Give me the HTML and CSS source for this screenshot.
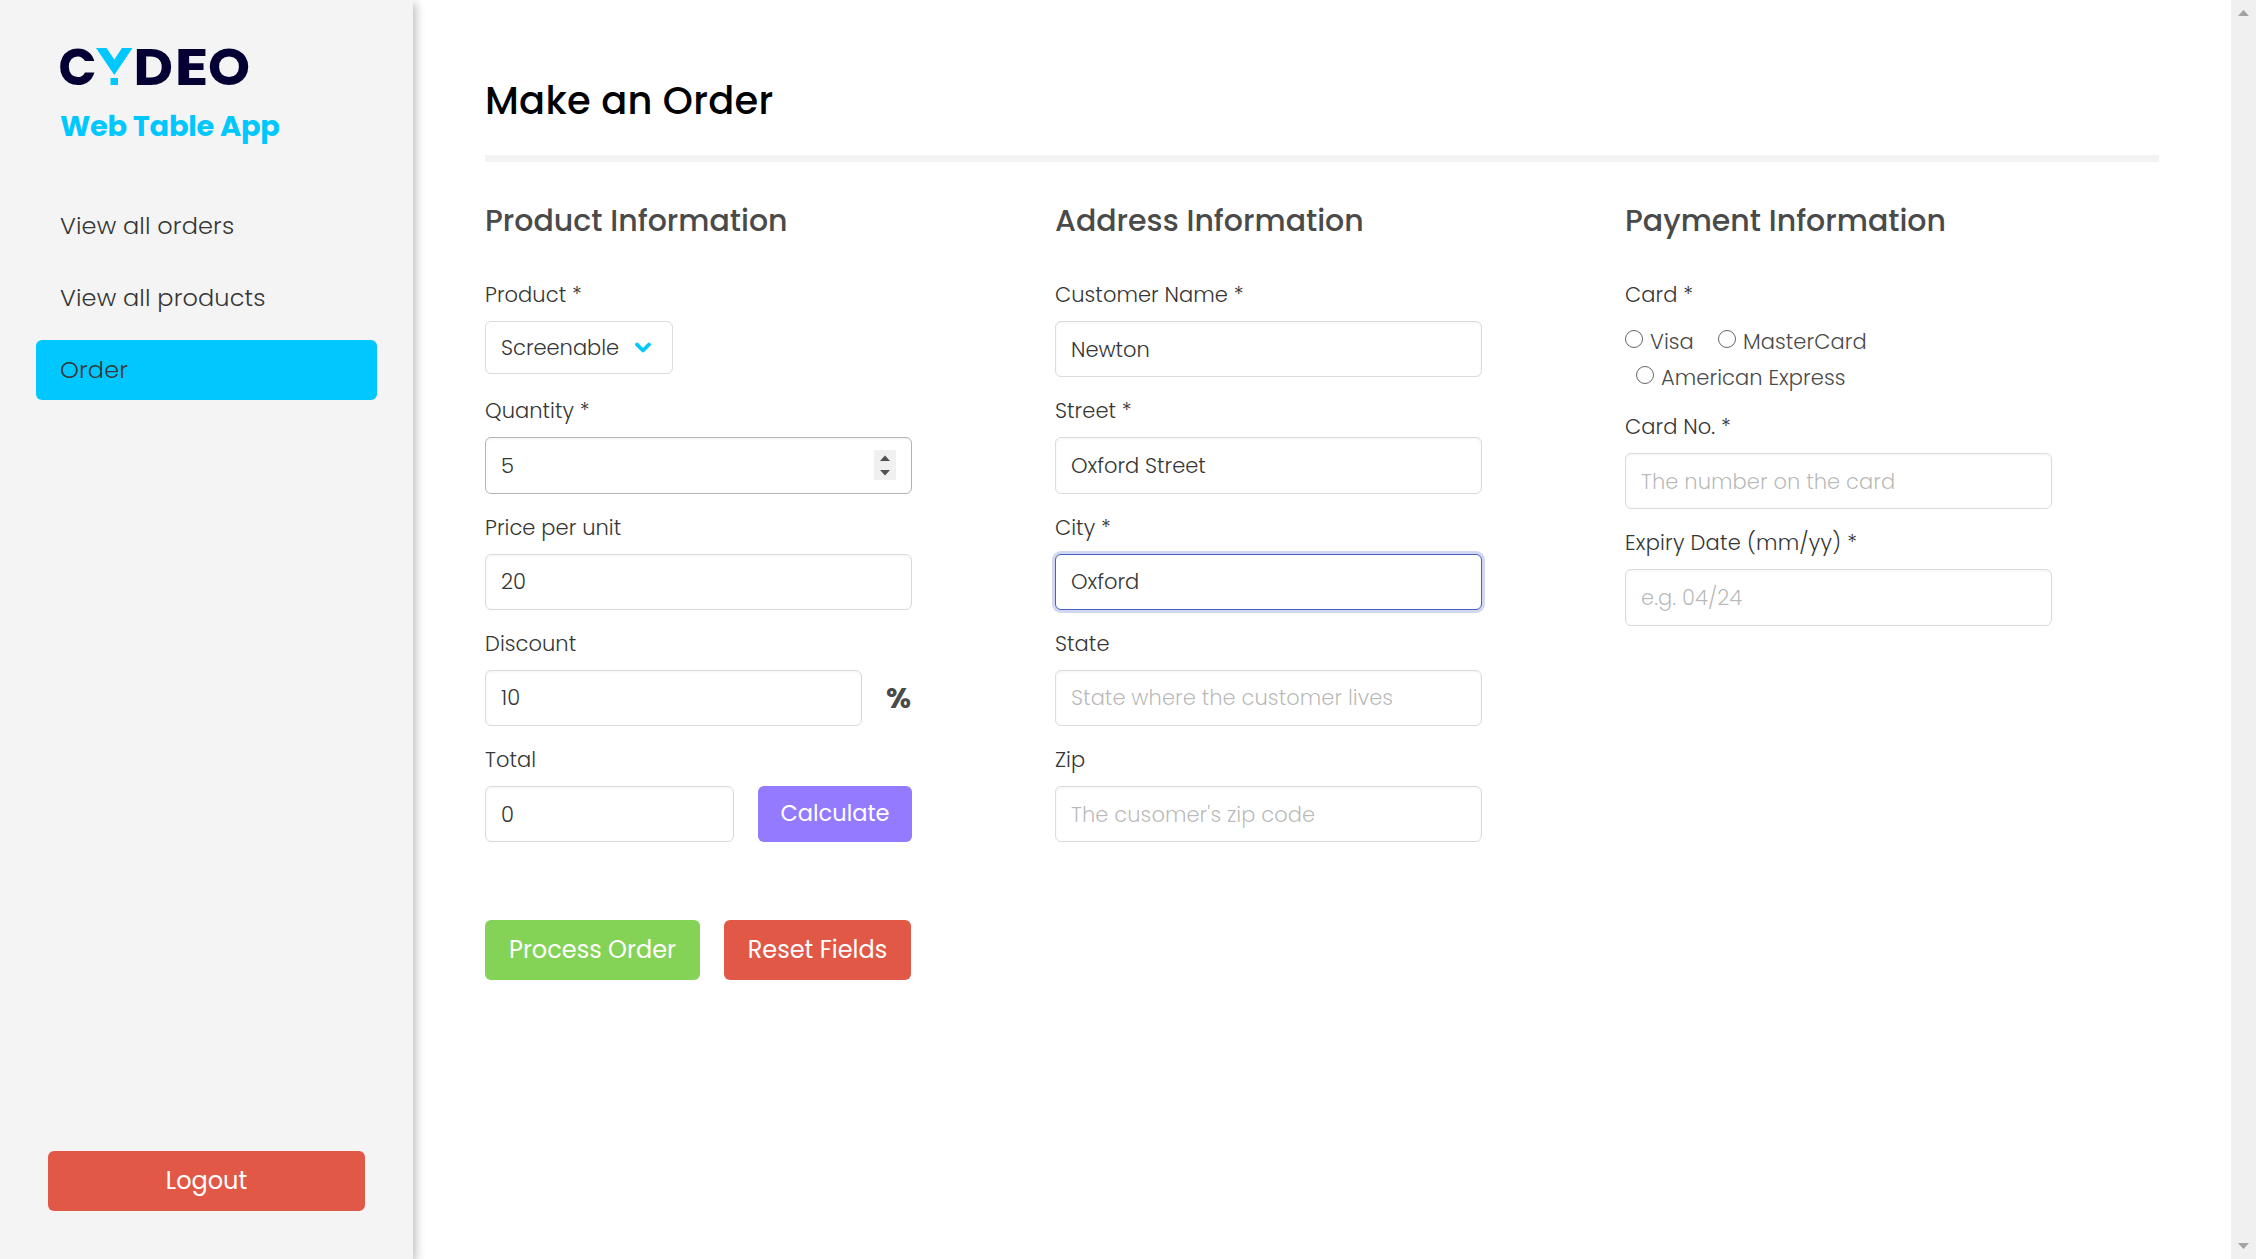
FILE: index.html
```html
<!DOCTYPE html>
<html lang="en">
<head>
<meta charset="utf-8">
<title>Web Table App - Order</title>
<link rel="stylesheet" href="styles.css">
</head>
<body>
<div class="app">
  <aside class="sidebar">
    <svg class="logo" width="200" height="40" viewBox="0 0 200 40" role="img" aria-label="Cydeo">
      <g class="logo-text">
        <text x="-1.600" y="38" textLength="38" lengthAdjust="spacingAndGlyphs">C</text>
        <text x="73.500" y="38" textLength="39.500" lengthAdjust="spacingAndGlyphs">D</text>
        <text x="114.500" y="38" textLength="34" lengthAdjust="spacingAndGlyphs">E</text>
        <text x="148" y="38" textLength="42" lengthAdjust="spacingAndGlyphs">O</text>
      </g>
      <path class="logo-mark" d="M36 1H46.500L54.300 12.500L62 1H72.500L54.300 28ZM50.500 31H58V38H50.500Z"/>
    </svg>
    <h1 class="brand">Web Table App</h1>
    <nav class="menu">
      <a class="menu-item">View all orders</a>
      <a class="menu-item">View all products</a>
      <a class="menu-item active">Order</a>
    </nav>
    <button class="btn danger logout">Logout</button>
  </aside>

  <main class="main">
    <h2 class="title">Make an Order</h2>
    <hr class="rule">
    <form class="columns">
      <section class="column">
        <h3 class="subtitle">Product Information</h3>
        <div class="field">
          <label class="label">Product *</label>
          <div class="control">
            <div class="select"><span>Screenable</span>
              <svg width="16" height="11" viewBox="0 0 16 11"><path d="M2 2.500L8 8.500L14 2.500" fill="none" stroke="#00c8ff" stroke-width="3.800" stroke-linecap="round" stroke-linejoin="round"/></svg>
            </div>
          </div>
        </div>
        <div class="field">
          <label class="label">Quantity *</label>
          <div class="control">
            <div class="input tall hovered number"><span>5</span>
              <svg class="spinner" width="22" height="30" viewBox="0 0 22 30"><rect width="22" height="30" fill="#f0f0f0"/><path d="M6 11L11 5.500L16 11ZM6 20L11 25.500L16 20Z" fill="#505050"/></svg>
            </div>
          </div>
        </div>
        <div class="field">
          <label class="label">Price per unit</label>
          <div class="control"><input class="input" value="20"></div>
        </div>
        <div class="field">
          <label class="label">Discount</label>
          <div class="control"><input class="input" value="10"><span class="percent">%</span></div>
        </div>
        <div class="field">
          <label class="label">Total</label>
          <div class="control"><input class="input" value="0"><button class="btn primary" type="button">Calculate</button></div>
        </div>
        <div class="actions">
          <button class="btn success" type="button">Process Order</button>
          <button class="btn danger reset" type="button">Reset Fields</button>
        </div>
      </section>

      <section class="column">
        <h3 class="subtitle">Address Information</h3>
        <div class="field">
          <label class="label">Customer Name *</label>
          <div class="control"><input class="input" value="Newton"></div>
        </div>
        <div class="field">
          <label class="label">Street *</label>
          <div class="control"><input class="input tall" value="Oxford Street"></div>
        </div>
        <div class="field">
          <label class="label">City *</label>
          <div class="control"><input class="input focused" value="Oxford"></div>
        </div>
        <div class="field">
          <label class="label">State</label>
          <div class="control"><input class="input" placeholder="State where the customer lives"></div>
        </div>
        <div class="field">
          <label class="label">Zip</label>
          <div class="control"><input class="input" placeholder="The cusomer's zip code"></div>
        </div>
      </section>

      <section class="column">
        <h3 class="subtitle">Payment Information</h3>
        <div class="field cards">
          <label class="label">Card *</label>
          <div class="radios">
            <label class="radio visa"><i class="dot"></i>Visa</label>
            <label class="radio master"><i class="dot"></i>MasterCard</label>
            <label class="radio amex"><i class="dot"></i>American Express</label>
          </div>
        </div>
        <div class="field">
          <label class="label">Card No. *</label>
          <div class="control"><input class="input" placeholder="The number on the card"></div>
        </div>
        <div class="field">
          <label class="label expiry">Expiry Date (mm/yy) *</label>
          <div class="control"><input class="input tall" placeholder="e.g. 04/24"></div>
        </div>
      </section>
    </form>
  </main>

  <div class="scrollbar">
    <svg width="11" height="6" viewBox="0 0 11 6"><path d="M0 6L5.500 0L11 6Z"/></svg>
    <svg width="11" height="6" viewBox="0 0 11 6"><path d="M0 0L5.500 6L11 0Z"/></svg>
  </div>
</div>
</body>
</html>
```

FILE: styles.css
```css
* { box-sizing: border-box; margin: 0; padding: 0; }

body {
  font-family: Poppins, Inter, "Liberation Sans", sans-serif;
  font-feature-settings: "cv11";
  font-size: 21px;
  font-weight: 300;
  color: #363636;
  background: #fff;
  overflow: hidden;
}

input, button { font: inherit; font-feature-settings: inherit; }

.app { display: flex; height: 1259px; }

/* Sidebar */
.sidebar {
  width: 413px;
  flex: none;
  display: flex;
  flex-direction: column;
  padding: 47px 36px 48px;
  background: #f4f4f4;
  box-shadow: 3px 3px 9px rgba(0, 0, 0, .25);
}
.logo { margin-left: 24px; overflow: visible; }
.logo-text { font-size: 50.500px; font-weight: 700; fill: #040033; }
.logo-mark { fill: #00c8ff; }
.brand {
  margin: 17px 0 0 24px;
  line-height: 44px;
  font-size: 28.800px;
  font-weight: 700;
  color: #00c8ff;
  letter-spacing: -.22px;
}
.menu { display: flex; flex-direction: column; gap: 12px; margin-top: 48px; }
.menu-item {
  height: 60px;
  padding-left: 24px;
  border-radius: 6px;
  line-height: 59px;
  font-size: 24px;
  letter-spacing: .13px;
}
.menu-item.active { background: #00c8ff; }

/* Buttons */
.btn {
  height: 60px;
  border: 0;
  border-radius: 6px;
  color: #fff;
  font-size: 24px;
  font-weight: 400;
  line-height: 58px;
  text-align: center;
}
.danger { background: #e15847; }
.success { background: #84d356; width: 215px; }
.primary { background: #937aff; width: 154px; height: 56px; margin-left: 24px; padding-bottom: 2px; flex: none; font-size: 22.500px; line-height: 54px; }
.reset { width: 187px; }
.logout { margin: auto 12px 0; }

/* Main */
.main { flex: 1; padding: 73px 72px 0; }
.title {
  height: 56px;
  line-height: 56px;
  font-size: 38.400px;
  font-weight: 500;
  color: #000;
  letter-spacing: .26px;
}
.rule { height: 7px; margin-top: 26px; border: 0; background: #f3f3f3; }
.columns { display: grid; grid-template-columns: 427px 427px 427px; column-gap: 143px; margin-top: 36px; }
.subtitle {
  height: 45px;
  line-height: 45px;
  font-size: 30px;
  font-weight: 500;
  color: #4a4a4a;
  white-space: nowrap;
}

/* Fields */
.field { height: 116.250px; padding-top: 36px; }
.label { display: block; height: 42px; line-height: 32px; letter-spacing: .06px; }
.expiry { letter-spacing: .22px; }
.control { display: flex; height: 56px; align-items: flex-start; }
.input {
  flex: 1;
  min-width: 0;
  height: 56px;
  padding: 0 15px;
  border: 1px solid #dbdbdb;
  border-radius: 6px;
  outline: 0;
  background: #fff;
  box-shadow: inset 0 1px 3px rgba(10, 10, 10, .05);
  color: #363636;
}
.input.tall { height: 57px; }
.input::placeholder { color: rgba(54, 54, 54, .36); opacity: 1; letter-spacing: .07px; }
.hovered { border-color: #b5b5b5; }
.focused { border-color: #485fc7; box-shadow: 0 0 0 3px rgba(72, 95, 199, .25); }
.number { display: flex; align-items: center; justify-content: space-between; }
.spinner { margin-top: -2px; }
.select {
  display: flex;
  align-items: center;
  width: 188px;
  height: 53px;
  padding-left: 15px;
  gap: 16px;
  border: 1px solid #dbdbdb;
  border-radius: 6px;
}
.percent { margin-left: 24px; width: 26px; line-height: 56px; font-size: 28.800px; font-weight: 700; color: #4a4a4a; }
.actions { display: flex; gap: 24px; margin-top: 96px; }

/* Radios */
.cards { height: 132px; }
.radios { display: flex; flex-wrap: wrap; color: #4a4a4a; margin-top: -12px; padding-top: 15px; }
.radio { display: flex; height: 36px; line-height: 36px; letter-spacing: .08px; }
.dot { width: 18px; height: 18px; margin: 6px 7px 0 0; border: 1.500px solid #666; border-radius: 50%; background: #fff; }
.visa { width: 93px; }
.master { width: 300px; }
.amex { margin-left: 11px; }

/* Scrollbar */
.scrollbar {
  width: 25px;
  flex: none;
  display: flex;
  flex-direction: column;
  align-items: center;
  justify-content: space-between;
  padding: 10px 0;
  background: #f0f0f0;
  fill: #a3a3a3;
}
```
